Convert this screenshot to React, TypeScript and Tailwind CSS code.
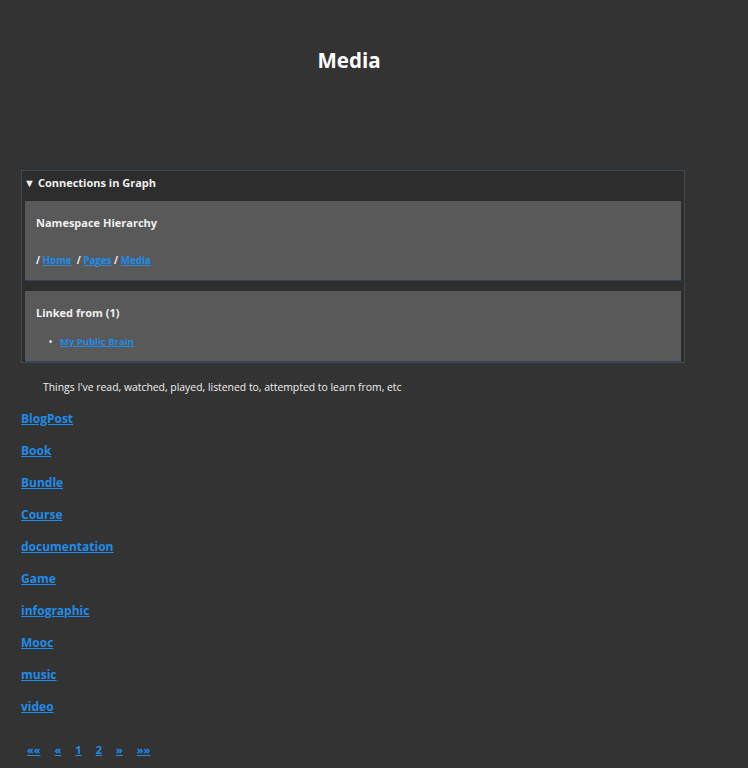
import React from "react"

const categories = [
  "BlogPost",
  "Book",
  "Bundle",
  "Course",
  "documentation",
  "Game",
  "infographic",
  "Mooc",
  "music",
  "video",
]

const pages = ["««", "«", "1", "2", "»", "»»"]

const linkCls = "text-[#1f8ceb] underline underline-offset-1"

export default function App() {
  return (
    <div className="min-h-[768px] bg-[#333333] font-['Open_Sans',sans-serif] text-[#f0f0f0]">
      <div className="w-[664px] pl-[21px] box-content">
        <h1 className="pt-[46px] pr-[8px] text-center text-[20.5px] font-bold leading-[28px] text-white">
          Media
        </h1>

        {/* Connections */}
        <div className="mt-[96px] border border-[#3c4a58] bg-[#2d2d2d]">
          <div className="flex h-[30px] items-start gap-[3px] pt-[5px] pl-[2px] text-[11px] font-bold leading-[14px]">
            <span className="text-[11px]">▼</span>
            <span>Connections in Graph</span>
          </div>
          <div className="mx-[3px] border-b border-[#35435a] bg-[#595959] px-[11px] pt-[13px] pb-[12px]">
            <div className="text-[11px] font-bold leading-[18px]">Namespace Hierarchy</div>
            <div className="mt-[22px] text-[9.8px] font-bold leading-[14px]">
              / <a className={linkCls}>Home</a>&nbsp; / <a className={linkCls}>Pages</a>&nbsp;/ <a className={linkCls}>Media</a>
            </div>
          </div>
          <div className="mx-[3px] mt-[10px] border-b border-[#35435a] bg-[#595959] px-[11px] pt-[13px] pb-[12px]">
            <div className="text-[11px] font-bold leading-[18px]">Linked from (1)</div>
            <ul className="mt-[13px] pl-[13px] text-[9.5px] font-bold leading-[14px]">
              <li className="flex items-center gap-[8px]">
                <span className="text-[8px]">•</span>
                <a className={linkCls}>My Public Brain</a>
              </li>
            </ul>
          </div>
        </div>

        <p className="mt-[16px] pl-[22px] text-[10.4px] leading-[16px]">
          Things I've read, watched, played, listened to, attempted to learn from, etc
        </p>

        <div className="mt-[14px] flex flex-col gap-[12px]">
          {categories.map((c) => (
            <a key={c} className={`${linkCls} block w-fit text-[12px] font-bold leading-[20px]`}>
              {c}
            </a>
          ))}
        </div>

        <div className="mt-[25px] flex items-center gap-[14px] pl-[6px] text-[11px] font-bold leading-[16px]">
          {pages.map((p) => (
            <a key={p} className={linkCls}>
              {p}
            </a>
          ))}
        </div>
      </div>
    </div>
  )
}
